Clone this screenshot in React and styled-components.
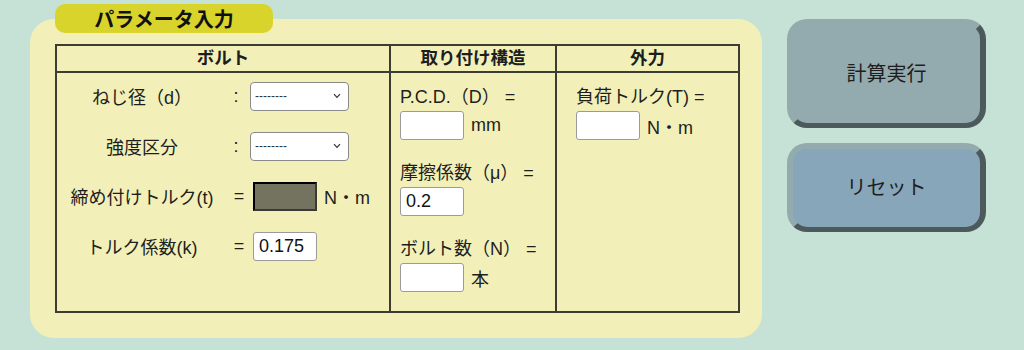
import React from "react";
import styled, { createGlobalStyle } from "styled-components";

const GlobalStyle = createGlobalStyle`
  html, body {
    margin: 0;
    padding: 0;
    background: #c6e1d6;
  }
  body {
    font-family: "Liberation Sans", "Noto Sans CJK JP", sans-serif;
    color: #1e1e1e;
  }
`;

const Page = styled.div`
  display: flex;
  align-items: flex-start;
  width: 1024px;
  height: 350px;
  padding: 19px 0 0 30px;
  box-sizing: border-box;
`;

const Panel = styled.section`
  position: relative;
  width: 732px;
  height: 319px;
  box-sizing: border-box;
  padding: 25px 0 0 25px;
  background: #f2f0b8;
  border-radius: 24px;
`;

const TitleTag = styled.div`
  position: absolute;
  top: -15px;
  left: 25px;
  width: 218px;
  height: 29px;
  display: flex;
  align-items: center;
  justify-content: center;
  background: #d8d42b;
  border-radius: 10px;
  font-size: 20px;
  font-weight: bold;
  color: #111;
`;

const Table = styled.table`
  border-collapse: collapse;
  width: 683px;
  height: 269px;
  table-layout: fixed;
`;

const Th = styled.th`
  height: 25px;
  padding: 0;
  border: 2px solid #3c3c33;
  font-size: 17.5px;
  font-weight: bold;
  line-height: 25px;
  text-align: center;
`;

const Td = styled.td`
  vertical-align: top;
  padding: ${(p) => p.$pad};
  border: 2px solid #3c3c33;
`;

const BoltGrid = styled.div`
  display: grid;
  grid-template-columns: 170px 24px auto;
  grid-auto-rows: 50px;
  align-items: center;
  margin-top: -2px;
  font-size: 18px;
`;

const Label = styled.div`
  text-align: center;
  white-space: nowrap;
`;

const Op = styled.div`
  text-align: center;
  margin-left: ${(p) => p.$shift || 0}px;
`;

const Field = styled.div`
  display: flex;
  align-items: center;
  gap: 7px;
  font-size: 18px;
`;

const SelectWrap = styled.div`
  position: relative;
  width: 99px;
  height: 29px;
  margin-left: -1px;
`;

const Select = styled.select`
  appearance: none;
  width: 100%;
  height: 100%;
  padding: 0 4px;
  font-family: "Liberation Sans", sans-serif;
  font-size: 12px;
  background: #fff;
  border: 1px solid #8a8a8a;
  border-radius: 4px;
  color: #333;
  -webkit-text-fill-color: #333;
  outline: none;
`;

const Chevron = styled.svg`
  position: absolute;
  right: 8px;
  top: 11px;
  width: 8px;
  height: 6px;
  pointer-events: none;
`;

const Input = styled.input`
  width: 64px;
  height: 29px;
  box-sizing: border-box;
  margin: 0 0 0 ${(p) => p.$ml || 0}px;
  padding: 0 5px;
  font-family: "Liberation Sans", sans-serif;
  font-size: 18px;
  color: #111;
  background: ${(p) => (p.disabled ? "#74735f" : "#fff")};
  border: ${(p) => (p.disabled ? "2px inset #3a3a33" : "1px solid #9a9a9a")};
  border-radius: ${(p) => (p.disabled ? 0 : 3)}px;
`;

const Group = styled.div`
  display: flex;
  flex-direction: column;
  gap: 1px;
  margin-bottom: 21px;
  font-size: 18px;

  &:last-child {
    margin-bottom: 0;
  }
`;

const GroupLabel = styled.div`
  height: 25px;
  line-height: 25px;
  white-space: nowrap;
`;

const ButtonColumn = styled.div`
  display: flex;
  flex-direction: column;
  gap: 15px;
  margin-left: 25px;
`;

const ActionButton = styled.button`
  width: 199px;
  height: ${(p) => p.$h}px;
  box-sizing: border-box;
  background: ${(p) => p.$face};
  border-style: solid;
  border-width: 6px 6px 5px 6px;
  border-color: #93abad #4c5a5b #4c5a5b #93abad;
  border-radius: 20px;
  font-family: "Noto Sans CJK JP", sans-serif;
  font-size: 20px;
  color: #1e1e1e;
  padding: 0 0 3px 0;
`;

function Dropdown() {
  return (
    <SelectWrap>
      <Select defaultValue="">
        <option value="">--------</option>
      </Select>
      <Chevron viewBox="0 0 8 6">
        <path d="M1 1.2 L4 4.3 L7 1.2" fill="none" stroke="#333" strokeWidth="1.2" />
      </Chevron>
    </SelectWrap>
  );
}

function BoltColumn() {
  return (
    <BoltGrid>
      <Label>ねじ径（d）</Label>
      <Op $shift={-6}>:</Op>
      <Field>
        <Dropdown />
      </Field>

      <Label>強度区分</Label>
      <Op $shift={-6}>:</Op>
      <Field>
        <Dropdown />
      </Field>

      <Label>締め付けトルク(t)</Label>
      <Op>=</Op>
      <Field>
        <Input $ml={2} disabled />
        N・m
      </Field>

      <Label>トルク係数(k)</Label>
      <Op>=</Op>
      <Field>
        <Input $ml={2} defaultValue="0.175" />
      </Field>
    </BoltGrid>
  );
}

function InputGroup({ label, value, unit }) {
  return (
    <Group>
      <GroupLabel>{label}</GroupLabel>
      <Field>
        <Input defaultValue={value} />
        {unit}
      </Field>
    </Group>
  );
}

export default function App() {
  return (
    <>
      <GlobalStyle />
      <Page>
        <Panel>
          <TitleTag>パラメータ入力</TitleTag>
          <Table>
            <colgroup>
              <col style={{ width: 334 }} />
              <col style={{ width: 166 }} />
              <col style={{ width: 183 }} />
            </colgroup>
            <thead>
              <tr>
                <Th>ボルト</Th>
                <Th>取り付け構造</Th>
                <Th>外力</Th>
              </tr>
            </thead>
            <tbody>
              <tr>
                <Td $pad="0">
                  <BoltColumn />
                </Td>
                <Td $pad="12px 0 0 9px">
                  <InputGroup label="P.C.D.（D） =" unit="mm" />
                  <InputGroup label="摩擦係数（μ） =" value="0.2" />
                  <InputGroup label="ボルト数（N） =" unit="本" />
                </Td>
                <Td $pad="12px 0 0 19px">
                  <InputGroup label="負荷トルク(T) =" unit="N・m" />
                </Td>
              </tr>
            </tbody>
          </Table>
        </Panel>
        <ButtonColumn>
          <ActionButton $h={109} $face="#93abae">
            計算実行
          </ActionButton>
          <ActionButton $h={89} $face="#87a6ba">
            リセット
          </ActionButton>
        </ButtonColumn>
      </Page>
    </>
  );
}
